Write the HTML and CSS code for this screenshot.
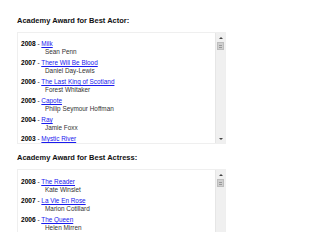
FILE: index.html
```html
<!DOCTYPE html>
<html>
<head>
<meta charset="utf-8">
<link rel="stylesheet" href="styles.css">
</head>
<body>
<h2 class="title">Academy Award for Best Actor:</h2>
<div class="box">
  <div class="content">
    <dl class="list">
      <dt><b>2008</b> - <a href="#">Milk</a></dt><dd>Sean Penn</dd>
      <dt><b>2007</b> - <a href="#">There Will Be Blood</a></dt><dd>Daniel Day-Lewis</dd>
      <dt><b>2006</b> - <a href="#">The Last King of Scotland</a></dt><dd>Forest Whitaker</dd>
      <dt><b>2005</b> - <a href="#">Capote</a></dt><dd>Philip Seymour Hoffman</dd>
      <dt><b>2004</b> - <a href="#">Ray</a></dt><dd>Jamie Foxx</dd>
      <dt><b>2003</b> - <a href="#">Mystic River</a></dt><dd>Sean Penn</dd>
    </dl>
  </div>
  <div class="scrollbar">
    <div class="sb-btn"><span class="arrow up"></span></div>
    <div class="sb-thumb"><span class="grip"></span></div>
    <div class="sb-track"></div>
    <div class="sb-btn"><span class="arrow down"></span></div>
  </div>
</div>

<h2 class="title second">Academy Award for Best Actress:</h2>
<div class="box short">
  <div class="content">
    <dl class="list">
      <dt><b>2008</b> - <a href="#">The Reader</a></dt><dd>Kate Winslet</dd>
      <dt><b>2007</b> - <a href="#">La Vie En Rose</a></dt><dd>Marion Cotillard</dd>
      <dt><b>2006</b> - <a href="#">The Queen</a></dt><dd>Helen Mirren</dd>
    </dl>
  </div>
  <div class="scrollbar">
    <div class="sb-btn"><span class="arrow up"></span></div>
    <div class="sb-thumb"><span class="grip"></span></div>
    <div class="sb-track"></div>
  </div>
</div>
</body>
</html>
```

FILE: styles.css
```css
html, body {
  margin: 0;
  background: #ffffff;
}
body {
  padding: 16px 0 0 17px;
  font-family: "Liberation Sans", Arial, sans-serif;
  color: #000;
}
.title {
  margin: 0 0 7px;
  font-size: 7.5px;
  line-height: 9px;
  font-weight: bold;
  color: #111;
}
.title.second {
  margin-top: 9px;
}
.box {
  display: flex;
  width: 209px;
  height: 112px;
  box-sizing: border-box;
  border: 1px solid #efefef;
  background: #fff;
}
.box.short {
  height: 63px;
  border-bottom: none;
}
.content {
  flex: 1;
  min-width: 0;
  overflow: hidden;
}
.list {
  margin: 0;
  padding: 7px 0 0 3px;
  font-size: 6.4px;
  line-height: 8px;
}
.short .list {
  padding-top: 8px;
}
.list dt {
  margin: 0;
  color: #222;
  white-space: nowrap;
}
.list dt b {
  font-size: 6.6px;
  color: #000;
}
.list a {
  color: #1a1aee;
  text-decoration: underline;
}
.list dd {
  margin: 0 0 3px 24px;
  color: #333;
  white-space: nowrap;
}
.scrollbar {
  width: 9px;
  flex: none;
  display: flex;
  flex-direction: column;
  background: #f0f0f0;
  border-left: 1px solid #e6e6e6;
}
.sb-btn {
  height: 9px;
  flex: none;
  display: flex;
  align-items: center;
  justify-content: center;
}
.arrow {
  width: 0;
  height: 0;
  border-left: 2px solid transparent;
  border-right: 2px solid transparent;
}
.arrow.up {
  border-bottom: 2px solid #444;
}
.arrow.down {
  border-top: 2px solid #444;
}
.sb-thumb {
  height: 8px;
  flex: none;
  margin: 0 1px;
  background: #cfcfcf;
  border: 1px solid #bdbdbd;
  box-sizing: border-box;
  display: flex;
  align-items: center;
  justify-content: center;
}
.grip {
  width: 3px;
  height: 3px;
  border-top: 1px solid #999;
  border-bottom: 1px solid #999;
  box-sizing: border-box;
}
.sb-track {
  flex: 1;
}
```
